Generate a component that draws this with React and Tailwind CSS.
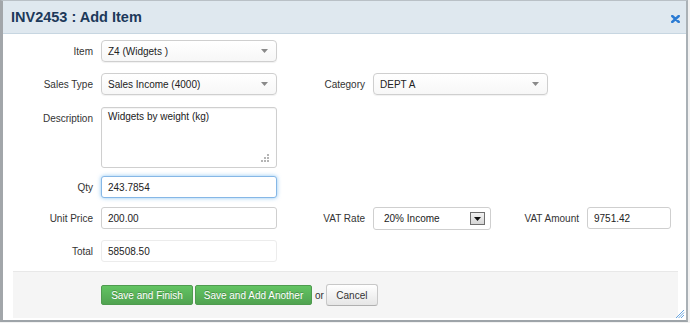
import React from 'react';

const FONT = "font-['Liberation_Sans',Arial,sans-serif]";

function Label({ children, width = 'w-[90px]' }) {
  return (
    <div className={`${width} h-[22px] shrink-0 flex items-center justify-end text-[10px] text-[#333]`}>
      {children}
    </div>
  );
}

function ChosenSelect({ value, width = 'w-[176px]' }) {
  return (
    <div className={`${width} ml-2 h-[22px] shrink-0 flex items-center justify-between rounded-[4px] border border-[#cfcfcf] bg-linear-to-b from-white to-[#f7f7f7] pl-[6px] pr-[8px] text-[10px] text-[#222] shadow-[0_1px_1px_rgba(0,0,0,0.06)]`}>
      <span>{value}</span>
      <svg width="7" height="4" viewBox="0 0 7 4">
        <path d="M0 0h7L3.5 4z" fill="#8a8a8a" />
      </svg>
    </div>
  );
}

function TextBox({ value, className = '' }) {
  return (
    <div className={`ml-2 h-[22px] shrink-0 flex items-center rounded-[3px] bg-white pl-[6px] text-[10px] text-[#222] ${className}`}>
      {value}
    </div>
  );
}

function Row({ children, className = '' }) {
  return <div className={`flex items-start ${className}`}>{children}</div>;
}

export default function App() {
  return (
    <div className={`${FONT} w-[690px] h-[323px] bg-[#f2f2f2]`}>
      <div className="relative w-[688px] h-[322px] border-l-[3px] border-t border-r-2 border-b-2 border-l-[#a2a6aa] border-t-[#b9c0c6] border-r-[#aab1b6] border-b-[#9ea4a9] bg-white flex flex-col">
        <div className="h-[33px] shrink-0 flex items-center justify-between border-b border-[#c7d6e1] bg-[#dfe8ef] pl-[8px] pr-[6px]">
          <h1 className="text-[14.5px] font-bold text-[#1c395a] leading-none">INV2453 : Add Item</h1>
          <svg width="9" height="8" viewBox="0 0 9 8" className="mt-[4px]">
            <path d="M1.2 1L7.8 7M7.8 1L1.2 7" stroke="#2b7bd3" strokeWidth="2.4" strokeLinecap="round" />
          </svg>
        </div>

        <div className="flex flex-col pt-[6px]">
          <Row>
            <Label>Item</Label>
            <ChosenSelect value="Z4 (Widgets )" />
          </Row>

          <Row className="mt-[11px]">
            <Label>Sales Type</Label>
            <ChosenSelect value="Sales Income (4000)" />
            <Label width="w-[88px]">Category</Label>
            <ChosenSelect value="DEPT A" width="w-[175px]" />
          </Row>

          <Row className="mt-[12px]">
            <Label>Description</Label>
            <div className="relative ml-2 h-[61px] w-[176px] shrink-0 rounded-[3px] border border-[#cfcfcf] bg-white px-[6px] pt-[1px] text-[10px] text-[#222] shadow-[inset_0_1px_1px_rgba(0,0,0,0.05)]">
              Widgets by weight (kg)
              <svg width="10" height="10" viewBox="0 0 10 10" className="absolute right-[6px] bottom-[4px]">
                <rect x="7" y="1" width="2" height="2" fill="#b5b5b5" />
                <rect x="4" y="4" width="2" height="2" fill="#b5b5b5" />
                <rect x="7" y="4" width="2" height="2" fill="#b5b5b5" />
                <rect x="1" y="7" width="2" height="2" fill="#b5b5b5" />
                <rect x="4" y="7" width="2" height="2" fill="#b5b5b5" />
                <rect x="7" y="7" width="2" height="2" fill="#b5b5b5" />
              </svg>
            </div>
          </Row>

          <Row className="mt-[8px]">
            <Label>Qty</Label>
            <TextBox
              value="243.7854"
              className="w-[176px] border border-[#86b7e6] shadow-[0_0_4px_rgba(82,168,236,0.65)]"
            />
          </Row>

          <Row className="mt-[9px]">
            <Label>Unit Price</Label>
            <TextBox value="200.00" className="w-[176px] border border-[#cfcfcf]" />
            <Label width="w-[88px]">VAT Rate</Label>
            <div className="ml-2 h-[23px] w-[118px] shrink-0 flex items-center justify-between rounded-[3px] border border-[#cfcfcf] bg-white pl-[10px] pr-[5px] text-[10px] text-[#222]">
              <span>20% Income</span>
              <div className="h-[13px] w-[15px] flex items-center justify-center border border-[#6f6f6f] bg-linear-to-b from-[#f2f2f2] to-[#d6d6d6]">
                <svg width="7" height="4" viewBox="0 0 7 4">
                  <path d="M0 0h7L3.5 4z" fill="#111" />
                </svg>
              </div>
            </div>
            <Label width="w-[88px]">VAT Amount</Label>
            <TextBox value="9751.42" className="w-[84px] border border-[#cfcfcf]" />
          </Row>

          <Row className="mt-[10px]">
            <Label>Total</Label>
            <TextBox value="58508.50" className="w-[176px] h-[21px] border border-[#ececec]" />
          </Row>
        </div>

        <div className="mt-[9px] ml-[10px] mr-[8px] h-[47px] flex items-center border-t border-[#e8e8e8] bg-[#f5f5f5] pl-[88px]">
          <button className="h-[20px] w-[92px] rounded-[2px] border border-[#4f9b4f] bg-linear-to-b from-[#62c462] to-[#51a351] text-[10px] text-white [text-shadow:0_-1px_0_rgba(0,0,0,0.25)]">
            Save and Finish
          </button>
          <button className="ml-[2px] h-[20px] w-[117px] rounded-[2px] border border-[#4f9b4f] bg-linear-to-b from-[#62c462] to-[#51a351] text-[10px] text-white [text-shadow:0_-1px_0_rgba(0,0,0,0.25)]">
            Save and Add Another
          </button>
          <span className="ml-[3px] text-[10px] text-[#333]">or</span>
          <button className="ml-[2px] h-[22px] w-[52px] rounded-[3px] border border-[#c8c8c8] border-b-[#b0b0b0] bg-linear-to-b from-white to-[#e6e6e6] text-[10px] text-[#333]">
            Cancel
          </button>
        </div>

        <svg width="10" height="10" viewBox="0 0 10 10" className="absolute right-[1px] bottom-[1px]">
          <path d="M9 1L1 9M9 3.5L3.5 9M9 6L6 9" stroke="#6aa6e0" strokeWidth="1" />
        </svg>
      </div>
    </div>
  );
}
